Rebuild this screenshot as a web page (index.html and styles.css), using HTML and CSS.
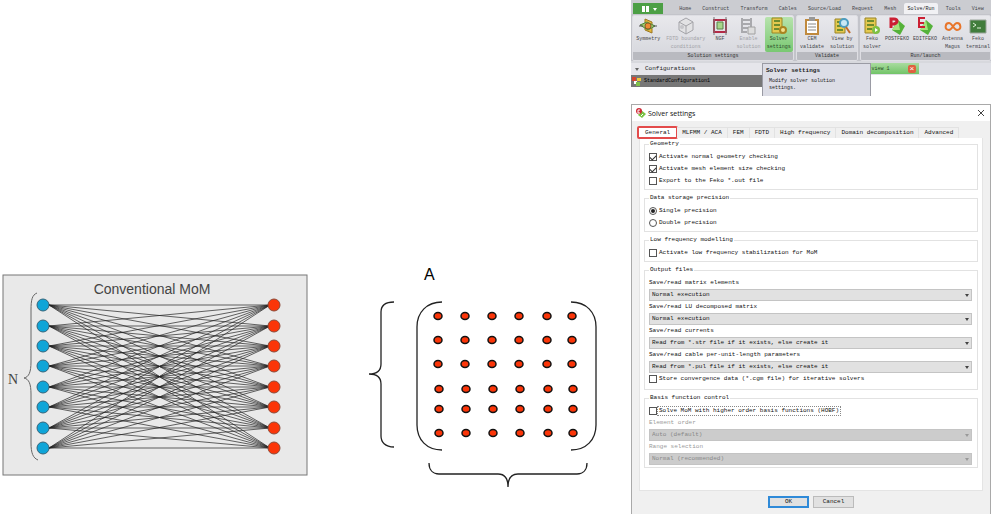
FILE: index.html
```html
<!DOCTYPE html>
<html lang="en">
<head>
    <meta charset="UTF-8">
    <meta name="viewport" content="width=device-width, initial-scale=1.0">
    <title>Solver settings</title>
    <link rel="stylesheet" href="styles.css">
</head>
<body>
    <main class="page">
        <!-- Conventional MoM diagram -->
        <svg class="mom" viewBox="0 0 306 202" role="img" aria-label="Conventional MoM">
            <rect class="mom-bg" x="1" y="1" width="304" height="200"/>
            <text class="mom-title" x="150" y="20" text-anchor="middle">Conventional MoM</text>
            <text class="mom-n" x="6" y="110">N</text>
            <path class="mom-brace" d="M35 19C30 21 29 26 29 36V88C29 98 27 103 22 104C27 105 29 110 29 120V169C29 179 31 184 36 186"/>
            <path class="mom-lines" id="momLines"/>
            <g id="momNodes"></g>
        </svg>

        <!-- Matrix A -->
        <svg class="matrix" viewBox="0 0 255 228" role="img" aria-label="Matrix A">
            <text class="matrix-name" x="82" y="20">A</text>
            <path class="brace" d="M52 42C43 42 39 46 39 52V104C39 110 35 114 27 114C35 114 39 118 39 124V176C39 182 43 187 52 187"/>
            <path class="brace" d="M100 42C85 42 75 52 75 67V165C75 180 85 190 100 190"/>
            <path class="brace" d="M229 42C244 42 254 52 254 67V165C254 180 244 190 229 190"/>
            <path class="brace" d="M87 203C87 210 91 214 97 214H156C162 214 166 218 166 227C166 218 170 214 176 214H235C241 214 245 210 245 203"/>
            <g id="matrixDots"></g>
        </svg>

        <div class="side">
            <!-- Ribbon -->
            <section class="ribbon">
                <nav class="menu">
                    <button class="app-button" aria-label="Application menu">
                        <svg viewBox="0 0 20 8" width="20" height="8"><path fill="#fff" d="M4 1h3v6H4zM8 1h3v6H8zM15 3h4l-2 3z"/></svg>
                    </button>
                    <a href="#">Home</a>
                    <a href="#">Construct</a>
                    <a href="#">Transform</a>
                    <a href="#">Cables</a>
                    <a href="#">Source/Load</a>
                    <a href="#">Request</a>
                    <a href="#">Mesh</a>
                    <a href="#" class="current">Solve/Run</a>
                    <a href="#">Tools</a>
                    <a href="#">View</a>
                </nav>
                <div class="groups">
                    <div class="group">
                        <div class="tools tools-solution">
                            <button class="tool">
                                <svg viewBox="0 0 18 18"><path fill="#e9b93c" stroke="#9b7620" d="M6 2l7 3v11l-7-3z"/><path fill="#9dc66b" stroke="#4f8736" d="M1 8l7-3 8 4-7 4z"/><circle cx="9" cy="9" r="3" fill="#ec8a35" stroke="#8e5a25"/><path stroke="#555" d="M0 9h4M14 9h4"/></svg>
                                Symmetry
                            </button>
                            <button class="tool" disabled>
                                <svg viewBox="0 0 18 18"><path fill="#e2e2e4" stroke="#a3a3a8" d="M9 1l7 4v8l-7 4-7-4V5z"/><path fill="none" stroke="#a3a3a8" d="M2 5l7 4 7-4M9 9v8"/><circle cx="5" cy="10" r="2" fill="#c5c5c9"/></svg>
                                FDTD boundary conditions
                            </button>
                            <button class="tool">
                                <svg viewBox="0 0 18 18"><path fill="none" stroke="#b42b48" stroke-width="2" d="M3 3h12v12H3z"/><path fill="#a8d58a" stroke="#5a8148" d="M6 5h6v7H6z"/><path stroke="#777" d="M3 0v18M15 0v18"/></svg>
                                NGF
                            </button>
                            <button class="tool" disabled>
                                <svg viewBox="0 0 18 18"><path fill="none" stroke="#a9a9ad" stroke-width="2" d="M3 1v15M12 1v10M3 3h9M3 7h9M3 11h9M3 15h5"/><path fill="#ddd" stroke="#a0a0a0" d="M9 10h7v7H9z"/></svg>
                                Enable solution
                            </button>
                            <button class="tool active">
                                <svg viewBox="0 0 18 18"><path fill="#e4c94f" stroke="#9a8526" d="M2 1h10v15H2z"/><path stroke="#6f8c2e" stroke-width="2" d="M4 4h6M4 8h6M4 12h5"/><circle cx="13" cy="13" r="3" fill="#f5df8a" stroke="#a98420" stroke-width="2"/></svg>
                                Solver settings
                            </button>
                        </div>
                        <div class="group-name">Solution settings</div>
                    </div>
                    <div class="group">
                        <div class="tools tools-validate">
                            <button class="tool">
                                <svg viewBox="0 0 18 18"><path fill="#fff" stroke="#c08a3e" stroke-width="2" d="M3 3h12v14H3z"/><path fill="#999" d="M6 0h6v4H6z"/><path stroke="#888" d="M5 7h8M5 10h8M5 13h8"/></svg>
                                CEM validate
                            </button>
                            <button class="tool">
                                <svg viewBox="0 0 18 18"><path fill="#e4c94f" stroke="#9a8526" d="M2 2h10v14H2z"/><path stroke="#6f8c2e" stroke-width="2" d="M4 5h6M4 9h5M4 13h6"/><circle cx="11" cy="6" r="4" fill="#c9e8f5" stroke="#4c9cc0" stroke-width="2"/><path stroke="#c26a28" stroke-width="2" d="M13 10l4 6"/></svg>
                                View by solution
                            </button>
                        </div>
                        <div class="group-name">Validate</div>
                    </div>
                    <div class="group">
                        <div class="tools tools-run">
                            <button class="tool">
                                <svg viewBox="0 0 18 18"><path fill="#e4c94f" stroke="#9a8526" d="M2 1h11v15H2z"/><path stroke="#6f8c2e" stroke-width="2" d="M4 4h7M4 8h7M4 12h5"/><circle cx="13" cy="13" r="4" fill="#7ec043"/><path fill="#fff" d="M12 11l3 2-3 2z"/></svg>
                                Feko solver
                            </button>
                            <button class="tool">
                                <svg viewBox="0 0 18 18"><path fill="#55b23a" d="M10 3l7 6-5 9-8-5z"/><path fill="#a6e27c" d="M10 3l2 10-8 0z"/><path fill="none" stroke="#cb1f33" stroke-width="3" d="M3 11V2h3q3 0 3 2t-3 3H3"/></svg>
                                POSTFEKO
                            </button>
                            <button class="tool">
                                <svg viewBox="0 0 18 18"><path fill="#55b23a" d="M10 3l7 6-5 9-8-5z"/><path fill="#a6e27c" d="M10 3l2 10-8 0z"/><path fill="none" stroke="#cb1f33" stroke-width="2" d="M9 1H3v9h6M3 6h5"/></svg>
                                EDITFEKO
                            </button>
                            <button class="tool">
                                <svg viewBox="0 0 18 18"><path fill="none" stroke="#e8752a" stroke-width="2" stroke-linecap="round" d="M5 13C0 13 1 6 5 6C8 6 10 13 13 13C18 13 17 6 13 6C10 6 8 13 5 13"/></svg>
                                Antenna Magus
                            </button>
                            <button class="tool">
                                <svg viewBox="0 0 18 18"><path fill="#417d3c" stroke="#9aa59a" d="M1 3h16v13H1z"/><path fill="none" stroke="#dff2d8" d="M4 6l3 2-3 2M8 11h4"/></svg>
                                Feko terminal
                            </button>
                        </div>
                        <div class="group-name">Run/launch</div>
                    </div>
                </div>
                <div class="workspace">
                    <div class="tree">
                        <div class="tree-head"><span class="arrow"></span>Configurations</div>
                        <div class="tree-row">
                            <svg viewBox="0 0 9 9" width="9" height="9"><path fill="#d8442e" d="M0 0h4v4H0z"/><path fill="#f0c83c" d="M5 1h4v3H5z"/><path fill="#fff" d="M2 4h3v3H2z"/><path fill="#7fc14b" d="M4 5h4v4H4z"/></svg>
                            StandardConfiguration1
                        </div>
                    </div>
                    <div class="view-tab">view 1<button class="view-close" aria-label="Close view">×</button></div>
                    <div class="tooltip" role="tooltip">
                        <strong>Solver settings</strong>
                        <p>Modify solver solution settings.</p>
                    </div>
                </div>
            </section>

            <!-- Solver settings dialog -->
            <form class="dialog">
                <header class="titlebar">
                    <svg viewBox="0 0 10 10" width="10" height="10"><path fill="#79c143" d="M5 2l5 4-4 4-4-3z"/><circle cx="3" cy="3" r="3" fill="#cf2a36"/><path fill="none" stroke="#fff" d="M4 2H2v3h2M7 6L5 8"/></svg>
                    <h1>Solver settings</h1>
                    <button type="button" class="close" aria-label="Close">
                        <svg viewBox="0 0 6 6" width="6" height="6"><path stroke="#444" d="M0 0l6 6M6 0L0 6"/></svg>
                    </button>
                </header>
                <div class="tabs" role="tablist">
                    <button type="button" role="tab" class="tab selected" aria-selected="true">General</button>
                    <button type="button" role="tab" class="tab">MLFMM / ACA</button>
                    <button type="button" role="tab" class="tab">FEM</button>
                    <button type="button" role="tab" class="tab">FDTD</button>
                    <button type="button" role="tab" class="tab">High frequency</button>
                    <button type="button" role="tab" class="tab">Domain decomposition</button>
                    <button type="button" role="tab" class="tab">Advanced</button>
                </div>
                <div class="panel">
                    <fieldset>
                        <legend>Geometry</legend>
                        <label class="option"><input type="checkbox" checked><span>Activate normal geometry checking</span></label>
                        <label class="option"><input type="checkbox" checked><span>Activate mesh element size checking</span></label>
                        <label class="option"><input type="checkbox"><span>Export to the Feko *.out file</span></label>
                    </fieldset>
                    <fieldset>
                        <legend>Data storage precision</legend>
                        <label class="option"><input type="radio" name="precision" checked><span>Single precision</span></label>
                        <label class="option"><input type="radio" name="precision"><span>Double precision</span></label>
                    </fieldset>
                    <fieldset>
                        <legend>Low frequency modelling</legend>
                        <label class="option"><input type="checkbox"><span>Activate low frequency stabilization for MoM</span></label>
                    </fieldset>
                    <fieldset class="files">
                        <legend>Output files</legend>
                        <label class="field-name" for="matrixElements">Save/read matrix elements</label>
                        <div class="select"><select id="matrixElements"><option>Normal execution</option></select></div>
                        <label class="field-name" for="luMatrix">Save/read LU decomposed matrix</label>
                        <div class="select"><select id="luMatrix"><option>Normal execution</option></select></div>
                        <label class="field-name" for="currents">Save/read currents</label>
                        <div class="select"><select id="currents"><option>Read from *.str file if it exists, else create it</option></select></div>
                        <label class="field-name" for="cable">Save/read cable per-unit-length parameters</label>
                        <div class="select"><select id="cable"><option>Read from *.pul file if it exists, else create it</option></select></div>
                        <label class="option"><input type="checkbox"><span>Store convergence data (*.cgm file) for iterative solvers</span></label>
                    </fieldset>
                    <fieldset>
                        <legend>Basis function control</legend>
                        <label class="option focused"><input type="checkbox"><span>Solve MoM with higher order basis functions (HOBF)</span></label>
                        <label class="field-name off" for="order">Element order</label>
                        <div class="select off"><select id="order" disabled><option>Auto (default)</option></select></div>
                        <label class="field-name off" for="range">Range selection</label>
                        <div class="select off"><select id="range" disabled><option>Normal (recommended)</option></select></div>
                    </fieldset>
                </div>
                <footer class="actions">
                    <button type="button" class="btn primary">OK</button>
                    <button type="button" class="btn">Cancel</button>
                </footer>
            </form>
        </div>
    </main>

    <script>
        // Nodes and all connections between them
        const ys = [31, 52, 72, 92, 113, 133, 154, 174];
        let lines = '';
        let nodes = '';
        ys.forEach(y1 => {
            ys.forEach(y2 => {
                lines += `M47 ${y1}L268 ${y2}`;
            });
            nodes += `<circle class="source" cx="41" cy="${y1}" r="6"/>`;
            nodes += `<circle class="target" cx="272" cy="${y1}" r="6"/>`;
        });
        document.getElementById('momLines').setAttribute('d', lines);
        document.getElementById('momNodes').innerHTML = nodes;

        // Matrix elements
        let dots = '';
        [56, 80, 104, 129, 149, 173].forEach((y, row) => {
            [96, 123, 150, 177, 205, 230].forEach(x => {
                dots += `<ellipse class="dot" cx="${x + (row > 2 ? 1 : 0)}" cy="${y}" rx="4" ry="3.5"/>`;
            });
        });
        document.getElementById('matrixDots').innerHTML = dots;
    </script>
</body>
</html>
```
FILE: styles.css
```css
* {
    box-sizing: border-box;
}
body {
    margin: 0;
    background-color: #fff;
    color: #111;
    font-family: "Liberation Mono", monospace;
    font-size: 6px;
    line-height: 8px;
}
button, select, input {
    margin: 0;
    padding: 0;
    font: inherit;
    color: inherit;
}
.page {
    display: grid;
    grid-template-columns: minmax(0, 306fr) minmax(0, 255fr) minmax(0, 360fr);
    column-gap: 34px;
    padding-left: 2px;
    align-items: end;
}

/* Diagrams */
.mom {
    width: 100%;
    margin-bottom: 39px;
}
.mom-bg {
    fill: #e9e9e9;
    stroke: #777;
}
.mom-title {
    font: 14px "Liberation Sans", sans-serif;
    fill: #444;
}
.mom-n {
    font: 14px "Liberation Serif", serif;
    fill: #444;
}
.mom-brace {
    fill: none;
    stroke: #666;
}
.mom-lines {
    fill: none;
    stroke: #222;
    stroke-width: 0.7;
}
.source {
    fill: #0fa5d8;
    stroke: #35657a;
}
.target {
    fill: #fb3508;
    stroke: #8c4a38;
}
.matrix {
    width: 100%;
    margin-bottom: 27px;
    overflow: visible;
}
.matrix-name {
    font: 16px "Liberation Sans", sans-serif;
    fill: #000;
}
.brace {
    fill: none;
    stroke: #222;
    stroke-width: 1.3;
}
.dot {
    fill: #fb3508;
    stroke: #111;
    stroke-width: 1.5;
}

/* Ribbon */
.side {
    display: flex;
    flex-direction: column;
    gap: 8px;
}
.ribbon {
    height: 96px;
    overflow: hidden;
    background-color: #cbccd1;
    color: #44454a;
    font-size: 5px;
    line-height: 8px;
}
.menu {
    display: flex;
    justify-content: space-between;
    align-items: stretch;
    height: 14px;
    padding: 3px 4px 0 2px;
}
.menu a {
    padding: 2px 3px;
    color: inherit;
    text-decoration: none;
}
.menu .current {
    background-color: #f1f1f4;
    border-radius: 2px 2px 0 0;
    color: #222;
}
.app-button {
    display: flex;
    align-items: center;
    justify-content: center;
    width: 30px;
    margin-right: 8px;
    border: 0;
    background-color: #4c9f45;
}
.groups {
    display: grid;
    grid-template-columns: 162fr 62fr 131fr;
    gap: 2px;
    padding: 1px 0 0 1px;
    background-color: #c3c4ca;
}
.group {
    min-width: 0;
    overflow: hidden;
    background: linear-gradient(#e8e8ec, #d5d6dc);
    border: 1px solid #dedee3;
    border-radius: 2px;
}
.tools {
    display: grid;
    height: 36px;
    padding-top: 1px;
}
.tools-solution {
    grid-template-columns: 30fr 44fr 24fr 32fr 28fr;
}
.tools-validate {
    grid-template-columns: 30fr 30fr;
}
.tools-run {
    grid-template-columns: 22fr 28fr 28fr 27fr 24fr;
}
.tool {
    display: flex;
    flex-direction: column;
    align-items: center;
    min-width: 0;
    border: 0;
    border-radius: 2px;
    background: none;
    line-height: 8px;
}
.tool svg {
    width: 18px;
    height: 18px;
    flex: none;
}
.tool:disabled {
    color: #a2a3a8;
}
.tool.active {
    background: linear-gradient(#b7e3ad, #79c872);
    color: #2d4a2b;
}
.group-name {
    height: 8px;
    background-color: #b9bac0;
    text-align: center;
    color: #333;
}
.workspace {
    position: relative;
    display: flex;
    align-items: flex-start;
    justify-content: space-between;
    height: 36px;
    border-top: 2px solid #d7d8dd;
    background: linear-gradient(#dfe0e6 12px, #fff 12px);
}
.tree {
    width: 37%;
}
.tree-head {
    display: flex;
    align-items: center;
    gap: 6px;
    height: 12px;
    padding-left: 4px;
    background-color: #e6e6eb;
    color: #222;
    font-size: 6px;
}
.arrow {
    border: 2px solid transparent;
    border-top: 3px solid #666;
    border-bottom: 0;
}
.tree-row {
    display: flex;
    align-items: center;
    gap: 3px;
    height: 12px;
    padding-left: 1px;
    background-color: #777;
    color: #000;
}
.view-tab {
    display: flex;
    justify-content: space-between;
    align-items: center;
    width: 14%;
    height: 11px;
    margin-right: 20%;
    padding: 0 3px;
    background: linear-gradient(#a9dc9f, #72c468);
    color: #2b4a28;
}
.view-close {
    width: 8px;
    height: 8px;
    border: 0;
    border-radius: 2px;
    background-color: #e0603f;
    color: #fff;
    font-size: 8px;
    line-height: 8px;
}
.tooltip {
    position: absolute;
    top: 0;
    left: 131px;
    width: 109px;
    height: 34px;
    padding: 3px 3px 0;
    border: 1px solid #9a9ba4;
    background-color: #dcdde6;
    color: #222;
}
.tooltip strong {
    font-size: 6px;
}
.tooltip p {
    width: 80px;
    margin: 3px 0 0 3px;
    line-height: 7px;
}

/* Dialog */
.dialog {
    border: 1px solid #a9a9a9;
    background-color: #f0f0f0;
}
.titlebar {
    display: flex;
    align-items: center;
    gap: 2px;
    height: 16px;
    padding: 0 6px 0 4px;
    background-color: #fff;
}
.titlebar h1 {
    flex: 1;
    margin: 0;
    font: 7px "Open Sans", sans-serif;
}
.close {
    display: flex;
    border: 0;
    background: none;
}
.tabs {
    display: flex;
    padding: 6px 6px 0;
}
.tab {
    height: 11px;
    padding: 0 5px;
    border: 1px solid #e2e2e2;
    border-width: 1px 1px 0 0;
    background-color: #f0f0f0;
    white-space: nowrap;
}
.tab.selected {
    padding: 0 7px;
    border: 0;
    background-color: #fff;
    outline: 2px solid #e34b4b;
    outline-offset: -1px;
    border-radius: 1px;
}
.panel {
    margin: 0 7px;
    padding: 2px 4px 22px;
    border: 1px solid #e4e4e4;
    border-top: 0;
    background-color: #fff;
}
fieldset {
    min-width: 0;
    margin: 0 0 4px;
    padding: 3px 5px 2px 4px;
    border: 1px solid #e2e2e2;
}
fieldset:last-child {
    margin-bottom: 0;
}
.files {
    padding-bottom: 4px;
}
legend {
    height: 8px;
    padding: 0 1px;
}
.option {
    display: flex;
    align-items: center;
    gap: 1px;
    height: 12px;
}
.option span {
    padding: 0 1px;
}
.option input {
    appearance: none;
    display: grid;
    place-items: center;
    width: 8px;
    height: 8px;
    border: 1px solid #555;
    background-color: #fff;
}
.option input[type="checkbox"]:checked::before {
    content: "";
    width: 5px;
    height: 3px;
    border: solid #333;
    border-width: 0 0 1px 1px;
    transform: rotate(-45deg);
}
.option input[type="radio"] {
    border-radius: 50%;
}
.option input[type="radio"]:checked::before {
    content: "";
    width: 4px;
    height: 4px;
    border-radius: 50%;
    background-color: #222;
}
.focused span {
    outline: 1px dotted #888;
}
.field-name {
    display: block;
    height: 12px;
    line-height: 12px;
}
.select {
    position: relative;
    height: 12px;
}
.select select {
    appearance: none;
    display: block;
    width: 100%;
    height: 12px;
    padding: 0 2px;
    border: 1px solid #c4c4c4;
    border-radius: 0;
    background-color: #e1e1e1;
}
.select::after {
    content: "";
    position: absolute;
    top: 5px;
    right: 3px;
    border: 2px solid transparent;
    border-top: 3px solid #444;
    border-bottom: 0;
}
.off {
    color: #999;
}
.select.off select {
    border-color: #c4c4c4;
    background-color: #ccc;
    color: #888;
    opacity: 1;
}
.select.off::after {
    border-top-color: #999;
}
.actions {
    display: flex;
    justify-content: center;
    gap: 4px;
    padding: 5px 0 6px;
}
.btn {
    width: 41px;
    height: 12px;
    border: 1px solid #bbb;
    background-color: #e1e1e1;
}
.btn.primary {
    border: 2px solid #2f8ad8;
}
```
